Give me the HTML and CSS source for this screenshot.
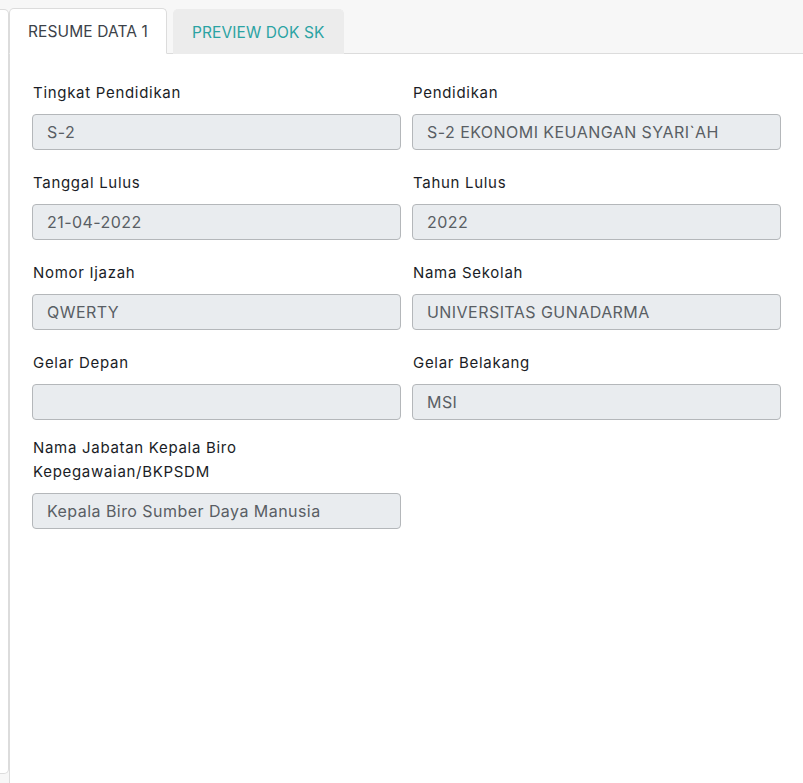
FILE: index.html
```html
<!DOCTYPE html>
<html lang="id">
<head>
<meta charset="utf-8">
<title>Resume Data</title>
<link rel="stylesheet" href="styles.css">
</head>
<body>
<div class="layout">
  <div class="side"></div>
  <div class="main">
    <div class="tabs">
      <div class="tab active">RESUME DATA 1</div>
      <div class="tab">PREVIEW DOK SK</div>
    </div>
    <div class="panel">
      <div class="form">
        <div class="group">
          <label class="label">Tingkat Pendidikan</label>
          <div class="input">S-2</div>
        </div>
        <div class="group">
          <label class="label">Pendidikan</label>
          <div class="input">S-2 EKONOMI KEUANGAN SYARI`AH</div>
        </div>
        <div class="group">
          <label class="label">Tanggal Lulus</label>
          <div class="input">21-04-2022</div>
        </div>
        <div class="group">
          <label class="label">Tahun Lulus</label>
          <div class="input">2022</div>
        </div>
        <div class="group">
          <label class="label">Nomor Ijazah</label>
          <div class="input">QWERTY</div>
        </div>
        <div class="group">
          <label class="label">Nama Sekolah</label>
          <div class="input">UNIVERSITAS GUNADARMA</div>
        </div>
        <div class="group">
          <label class="label">Gelar Depan</label>
          <div class="input"></div>
        </div>
        <div class="group">
          <label class="label">Gelar Belakang</label>
          <div class="input">MSI</div>
        </div>
        <div class="group group-wide-label">
          <label class="label">Nama Jabatan Kepala Biro Kepegawaian/BKPSDM</label>
          <div class="input">Kepala Biro Sumber Daya Manusia</div>
        </div>
      </div>
    </div>
  </div>
</div>
</body>
</html>
```
FILE: styles.css
```css
* { box-sizing: border-box; }

html, body {
  margin: 0;
  padding: 0;
}

body {
  background: #f7f7f7;
  font-family: "Inter", "Noto Sans", "Liberation Sans", sans-serif;
  color: #212529;
  width: 803px;
  height: 783px;
  overflow: hidden;
}

.layout {
  display: flex;
  height: 783px;
}

.side {
  width: 9px;
  flex: 0 0 9px;
  margin-top: 9px;
  height: 765px;
  background: #ffffff;
  border-top: 1px solid #dcdcdc;
  border-right: 1px solid #dcdcdc;
  border-bottom: 1px solid #dcdcdc;
  border-radius: 0 5px 5px 0;
}

.main {
  flex: 1;
  display: flex;
  flex-direction: column;
  min-width: 0;
}

.tabs {
  display: flex;
  align-items: flex-end;
  gap: 6px;
  height: 54px;
  padding-top: 9px;
  border-bottom: 1px solid #dcdcdc;
}

.tab {
  height: 45px;
  display: flex;
  align-items: center;
  padding: 0 18px;
  font-size: 15.5px;
  letter-spacing: 0.1px;
  color: #2ba3a3;
  background: #ececec;
  border: 1px solid #ececec;
  border-bottom: none;
  border-radius: 5px 5px 0 0;
  margin-bottom: -1px;
}

.tab.active {
  width: 158px;
  background: #ffffff;
  color: #3c4249;
  border: 1px solid #dcdcdc;
  border-bottom: 1px solid #ffffff;
  height: 46px;
}

.panel {
  flex: 1;
  background: #ffffff;
  border-left: 1px solid #dcdcdc;
  padding: 27px 22px 0 22px;
}

.form {
  display: grid;
  grid-template-columns: 1fr 1fr;
  column-gap: 11px;
  row-gap: 21px;
}

.group {
  display: flex;
  flex-direction: column;
}

.label {
  font-size: 15px;
  letter-spacing: 0.7px;
  line-height: 24px;
  color: #1a1d26;
  margin-bottom: 9px;
  padding-left: 1px;
}

.group-wide-label {
  margin-top: -5px;
}

.group-wide-label .label {
  padding-right: 120px;
}

.input {
  height: 36px;
  background: #e9ecef;
  border: 1px solid #b4b7ba;
  border-radius: 4px;
  padding: 0 14px;
  font-size: 16px;
  letter-spacing: 0.45px;
  color: #595e64;
  display: flex;
  align-items: center;
}
```
